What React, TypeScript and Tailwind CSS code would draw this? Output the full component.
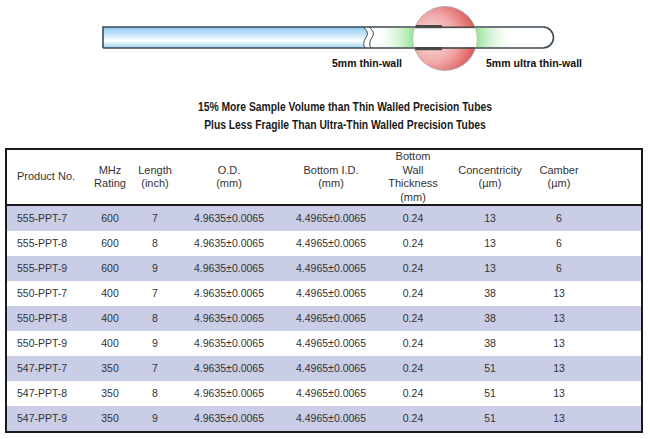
import React from "react";

type Row = {
  product: string;
  mhz: string;
  length: string;
  conc: string;
  camber: string;
};

const rows: Row[] = [
  { product: "555-PPT-7", mhz: "600", length: "7", conc: "13", camber: "6" },
  { product: "555-PPT-8", mhz: "600", length: "8", conc: "13", camber: "6" },
  { product: "555-PPT-9", mhz: "600", length: "9", conc: "13", camber: "6" },
  { product: "550-PPT-7", mhz: "400", length: "7", conc: "38", camber: "13" },
  { product: "550-PPT-8", mhz: "400", length: "8", conc: "38", camber: "13" },
  { product: "550-PPT-9", mhz: "400", length: "9", conc: "38", camber: "13" },
  { product: "547-PPT-7", mhz: "350", length: "7", conc: "51", camber: "13" },
  { product: "547-PPT-8", mhz: "350", length: "8", conc: "51", camber: "13" },
  { product: "547-PPT-9", mhz: "350", length: "9", conc: "51", camber: "13" },
];

const headers: string[][] = [
  ["MHz", "Rating"],
  ["Length", "(inch)"],
  ["O.D.", "(mm)"],
  ["Bottom I.D.", "(mm)"],
  ["Bottom", "Wall", "Thickness", "(mm)"],
  ["Concentricity", "(µm)"],
  ["Camber", "(µm)"],
];

const cols = "grid grid-cols-[81px_44px_46px_102px_102px_62px_92px_46px_1fr]";

// drawing of the tube with the magnified wall section
const TubeDrawing = () => (
  <svg width="650" height="85" viewBox="0 0 650 85" className="block">
    <defs>
      <linearGradient id="blueFill" x1="0" y1="0" x2="0" y2="1">
        <stop offset="0" stopColor="#8ccaf2" />
        <stop offset="0.45" stopColor="#d6edfb" />
        <stop offset="0.65" stopColor="#ffffff" />
        <stop offset="1" stopColor="#9ed2f3" />
      </linearGradient>
      <linearGradient id="greenLeft" x1="0" y1="0" x2="1" y2="0">
        <stop offset="0" stopColor="#ffffff" stopOpacity="0" />
        <stop offset="1" stopColor="#95e395" />
      </linearGradient>
      <linearGradient id="greenRight" x1="0" y1="0" x2="1" y2="0">
        <stop offset="0" stopColor="#95e395" />
        <stop offset="1" stopColor="#ffffff" stopOpacity="0" />
      </linearGradient>
      <radialGradient id="sphere" cx="0.3" cy="0.5" r="0.8">
        <stop offset="0" stopColor="#fbe6e6" />
        <stop offset="0.5" stopColor="#f0a4a4" />
        <stop offset="1" stopColor="#d83a3a" />
      </radialGradient>
      <clipPath id="lens">
        <circle cx="445" cy="38.5" r="32" />
      </clipPath>
    </defs>

    {/* white part of the tube */}
    <path d="M366 27 H543 A10.5 10.5 0 0 1 543 48 H366 Z" fill="#ffffff" />
    <rect x="372" y="28" width="42" height="19.5" fill="url(#greenLeft)" />
    <rect x="476" y="28" width="40" height="19.5" fill="url(#greenRight)" />

    {/* blue part with the break */}
    <path d="M103 27 H363 Q370 32 366 37.5 Q362 43 365 48 H103 Z" fill="url(#blueFill)" />
    <path d="M363 27 Q370 32 366 37.5 Q362 43 365 48" fill="none" stroke="#3d4a55" strokeWidth="1" />
    <path d="M369 27 Q376 32 372 37.5 Q368 43 371 48" fill="none" stroke="#3d4a55" strokeWidth="1" />

    {/* outline */}
    <path
      d="M103 48 V27 H543 A10.5 10.5 0 0 1 543 48 H103"
      fill="none"
      stroke="#3d4a55"
      strokeWidth="1.6"
    />

    {/* magnifier */}
    <circle cx="445" cy="38.5" r="32" fill="url(#sphere)" stroke="#a8a8a8" strokeWidth="0.8" />
    <g clipPath="url(#lens)">
      <rect x="412" y="27.5" width="66" height="20" fill="#ffffff" />
      <rect x="412" y="25" width="30" height="3.2" fill="#474747" />
      <rect x="442" y="26.5" width="36" height="1.6" fill="#474747" />
      <rect x="412" y="47" width="30" height="3.2" fill="#474747" />
      <rect x="442" y="47.2" width="36" height="1.6" fill="#474747" />
    </g>

    <text
      x="332"
      y="67"
      fontSize="10"
      fontWeight="bold"
      fontFamily="'Liberation Sans', Arial, sans-serif"
      fill="#111"
      textLength="70"
      lengthAdjust="spacingAndGlyphs"
    >
      5mm thin-wall
    </text>
    <text
      x="486"
      y="67"
      fontSize="10"
      fontWeight="bold"
      fontFamily="'Liberation Sans', Arial, sans-serif"
      fill="#111"
      textLength="96"
      lengthAdjust="spacingAndGlyphs"
    >
      5mm ultra thin-wall
    </text>
  </svg>
);

export default function App() {
  return (
    <div className="w-[650px] h-[439px] bg-white overflow-hidden font-['Liberation_Sans',Arial,sans-serif]">
      <TubeDrawing />

      <div className="mt-[13px] pl-[40px] flex justify-center">
        <div className="text-center text-[12px] leading-[18px] font-bold text-[#1a1a1a] scale-x-[0.86] whitespace-nowrap">
          <div>15% More Sample Volume than Thin Walled Precision Tubes</div>
          <div>Plus Less Fragile Than Ultra-Thin Walled Precision Tubes</div>
        </div>
      </div>

      <div className="mt-[14px] ml-[5px] w-[638px] border-2 border-[#1a1a1a]">
        {/* header */}
        <div className={`${cols} h-[56px] border-b-2 border-[#1a1a1a] text-[11px] leading-[13.5px] text-[#333]`}>
          <div className="flex items-center pl-[10px]">Product No.</div>
          {headers.map((lines, i) => (
            <div key={i} className="flex flex-col items-center justify-center text-center">
              {lines.map((l) => (
                <span key={l}>{l}</span>
              ))}
            </div>
          ))}
          <div />
        </div>

        {/* body */}
        {rows.map((r, i) => (
          <div
            key={r.product}
            className={`${cols} h-[25px] items-center text-[10.5px] text-[#333] ${i % 2 === 0 ? "bg-[#c9cde6]" : "bg-white"}`}
          >
            <div className="pl-[10px]">{r.product}</div>
            <div className="text-center">{r.mhz}</div>
            <div className="text-center">{r.length}</div>
            <div className="text-center">4.9635±0.0065</div>
            <div className="text-center">4.4965±0.0065</div>
            <div className="text-center">0.24</div>
            <div className="text-center">{r.conc}</div>
            <div className="text-center">{r.camber}</div>
            <div />
          </div>
        ))}
      </div>
    </div>
  );
}
